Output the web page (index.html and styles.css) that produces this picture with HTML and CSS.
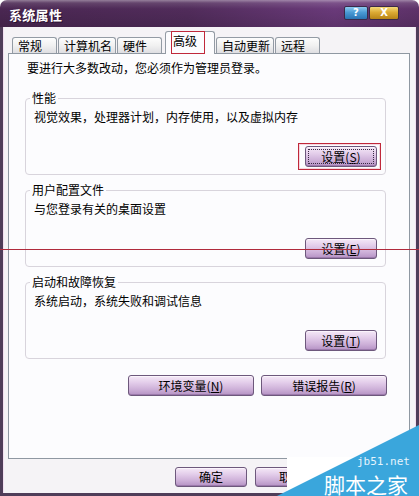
FILE: index.html
```html
<!DOCTYPE html>
<html lang="zh-CN">
<head>
<meta charset="utf-8">
<title>系统属性</title>
<link rel="stylesheet" href="styles.css">
</head>
<body>
<div class="window">
  <div class="titlebar">
    <span class="title">系统属性</span>
    <div class="caption-btns">
      <span class="cbtn help">?</span>
      <span class="cbtn close">X</span>
    </div>
  </div>
  <div class="client">
    <div class="tabs">
      <div class="tab">常规</div>
      <div class="tab">计算机名</div>
      <div class="tab">硬件</div>
      <div class="tab active">高级</div>
      <div class="tab">自动更新</div>
      <div class="tab">远程</div>
    </div>
    <div class="panel">
      <p class="note">要进行大多数改动，您必须作为管理员登录。</p>
      <fieldset class="group">
        <legend>性能</legend>
        <p class="desc">视觉效果，处理器计划，内存使用，以及虚拟内存</p>
        <div class="row"><button class="btn focus">设置(<u>S</u>)</button></div>
      </fieldset>
      <fieldset class="group">
        <legend>用户配置文件</legend>
        <p class="desc">与您登录有关的桌面设置</p>
        <div class="row"><button class="btn">设置(<u>E</u>)</button></div>
      </fieldset>
      <fieldset class="group">
        <legend>启动和故障恢复</legend>
        <p class="desc">系统启动，系统失败和调试信息</p>
        <div class="row"><button class="btn">设置(<u>T</u>)</button></div>
      </fieldset>
      <div class="row wide">
        <button class="btn big">环境变量(<u>N</u>)</button>
        <button class="btn big">错误报告(<u>R</u>)</button>
      </div>
    </div>
    <div class="footer">
      <button class="btn foot">确定</button>
      <button class="btn foot">取消</button>
    </div>
  </div>

  <div class="mark mark-tab"></div>
  <div class="mark mark-btn"></div>
  <div class="mark-line"></div>

  <div class="watermark">
    <svg class="wm-shape" width="149" height="76" viewBox="0 0 149 76">
      <rect x="17" y="37" width="132" height="39" fill="#ffffff"/>
      <polygon points="7,76 149,5 149,76" fill="#3aa6dc"/>
    </svg>
    <span class="wm-url">jb51.net</span>
    <span class="wm-name">脚本之家</span>
  </div>
</div>
</body>
</html>
```

FILE: styles.css
```css
html, body {
  margin: 0;
  padding: 0;
  background: #ffffff;
}

body {
  font-family: "Noto Sans CJK SC", "Noto Sans", sans-serif;
  font-size: 12px;
  color: #000;
}

.window {
  position: relative;
  width: 419px;
  height: 496px;
  display: flex;
  flex-direction: column;
  overflow: hidden;
}

/* ---------- title bar ---------- */
.titlebar {
  height: 27px;
  flex: none;
  display: flex;
  align-items: flex-start;
  justify-content: space-between;
  border-radius: 7px 7px 0 0;
  background:
    linear-gradient(180deg, rgba(255,255,255,0.40) 0, rgba(255,255,255,0.12) 3px, rgba(255,255,255,0) 9px, rgba(0,0,0,0.12) 100%),
    linear-gradient(90deg, #4a2752 0%, #512c5b 45%, #6a3a7a 80%, #5e3269 100%);
  box-sizing: border-box;
}

.title {
  color: #fff;
  font-weight: bold;
  font-size: 13px;
  line-height: 14px;
  padding: 8px 0 0 9px;
  letter-spacing: 0.3px;
  text-shadow: 1px 1px 0 #2a1030;
}

.caption-btns {
  display: flex;
  gap: 1px;
  margin: 6px 20px 0 0;
}

.cbtn {
  height: 14px;
  box-sizing: border-box;
  border: 1px solid #3a2a48;
  border-radius: 2px;
  color: #fff;
  font-family: "DejaVu Sans", sans-serif;
  font-weight: bold;
  font-size: 10px;
  line-height: 12px;
  text-align: center;
}

.help {
  width: 24px;
  background: linear-gradient(180deg, #8cc8ee 0%, #4a9ad4 45%, #2a74b4 100%);
}

.close {
  width: 30px;
  background: linear-gradient(180deg, #f4d878 0%, #dcaa34 45%, #b88416 100%);
}

/* ---------- client ---------- */
.client {
  flex: 1;
  display: flex;
  flex-direction: column;
  background: #f5f3f6;
  border-left: 3px solid #4f3d59;
  border-right: 3px solid #4f3d59;
  border-bottom: 3px solid #4f3d59;
  box-shadow: inset 1px 0 0 #f2dff0, inset -1px 0 0 #f2dff0;
  padding-top: 4px;
}

.tabs {
  height: 22px;
  display: flex;
  align-items: flex-end;
  gap: 1px;
  padding-left: 9px;
  position: relative;
  z-index: 1;
}

.tab {
  height: 16px;
  min-width: 45px;
  box-sizing: border-box;
  padding: 0 3px 0 5px;
  border: 1px solid #939ba4;
  border-bottom: none;
  border-radius: 3px 3px 0 0;
  background: linear-gradient(180deg, #fdfdfd 0%, #f1f1f1 50%, #dedee2 100%);
  line-height: 15px;
  white-space: nowrap;
}

.tab.active {
  height: 23px;
  width: 50px;
  margin: 0 0 -1px 2px;
  padding: 2px 0 0 7px;
  background: #fcfcfe;
  line-height: 14px;
}

.panel {
  height: 406px;
  margin-left: 5px;
  width: 402px;
  box-sizing: border-box;
  border: 1px solid #8f98a2;
  background: #fcfcfe;
  padding: 7px 23px 0 16px;
  display: flex;
  flex-direction: column;
  gap: 8px;
}

.note {
  margin: 0 0 8px 0;
  padding-left: 2px;
  line-height: 14px;
}

.group {
  margin: 0;
  padding: 5px 8px 7px 8px;
  border: 1px solid #d8d4dc;
  border-radius: 4px;
  min-width: 0;
}

.group legend {
  padding: 0 2px;
  margin-left: -4px;
  line-height: 14px;
}

.desc {
  margin: 0;
  line-height: 14px;
}

.row {
  display: flex;
  justify-content: flex-end;
  margin-top: 22px;
}

.row.wide {
  margin-top: 8px;
  gap: 7px;
  margin-right: -1px;
}

.btn {
  width: 72px;
  height: 21px;
  padding: 0;
  box-sizing: border-box;
  font-family: "Noto Sans CJK SC", "Noto Sans", sans-serif;
  font-size: 12px;
  line-height: 17px;
  color: #000;
  border: 1px solid #6d587c;
  border-radius: 3px;
  background: linear-gradient(180deg, #f5e9f7 0%, #e3cdea 35%, #cdb0d8 70%, #b592c4 100%);
  box-shadow: inset 0 1px 0 #fbf4fc, inset 0 -1px 0 #9c7aac;
}

.btn u {
  text-underline-offset: 1px;
}

.btn.focus {
  outline: 1px dotted #3a2a44;
  outline-offset: -4px;
}

.btn.big {
  width: 126px;
}

.footer {
  display: flex;
  justify-content: flex-start;
  gap: 8px;
  padding: 8px 0 0 172px;
}

.btn.foot {
  height: 20px;
  line-height: 16px;
}

/* ---------- annotations (overlays) ---------- */
.mark {
  position: absolute;
  border: 1px solid #c0283a;
  box-sizing: border-box;
  z-index: 5;
}

.mark-tab {
  left: 171px;
  top: 31px;
  width: 34px;
  height: 23px;
}

.mark-btn {
  left: 298px;
  top: 143px;
  width: 83px;
  height: 27px;
  box-shadow: inset 0 0 0 1px #f6d6e0;
}

.mark-line {
  position: absolute;
  left: 0;
  top: 249px;
  width: 419px;
  height: 1px;
  background: #b02a3c;
  z-index: 5;
}

/* ---------- watermark (overlay) ---------- */
.watermark {
  position: absolute;
  left: 270px;
  top: 420px;
  width: 149px;
  height: 76px;
  z-index: 6;
}

.wm-shape {
  display: block;
}

.wm-url {
  position: absolute;
  left: 87px;
  top: 36px;
  font-family: "DejaVu Sans Mono", monospace;
  font-size: 11px;
  line-height: 12px;
  color: #e6f4fc;
}

.wm-name {
  position: absolute;
  left: 54px;
  top: 53px;
  font-family: "Noto Sans CJK SC", sans-serif;
  font-size: 21px;
  line-height: 22px;
  color: #ffffff;
  white-space: nowrap;
}
```
